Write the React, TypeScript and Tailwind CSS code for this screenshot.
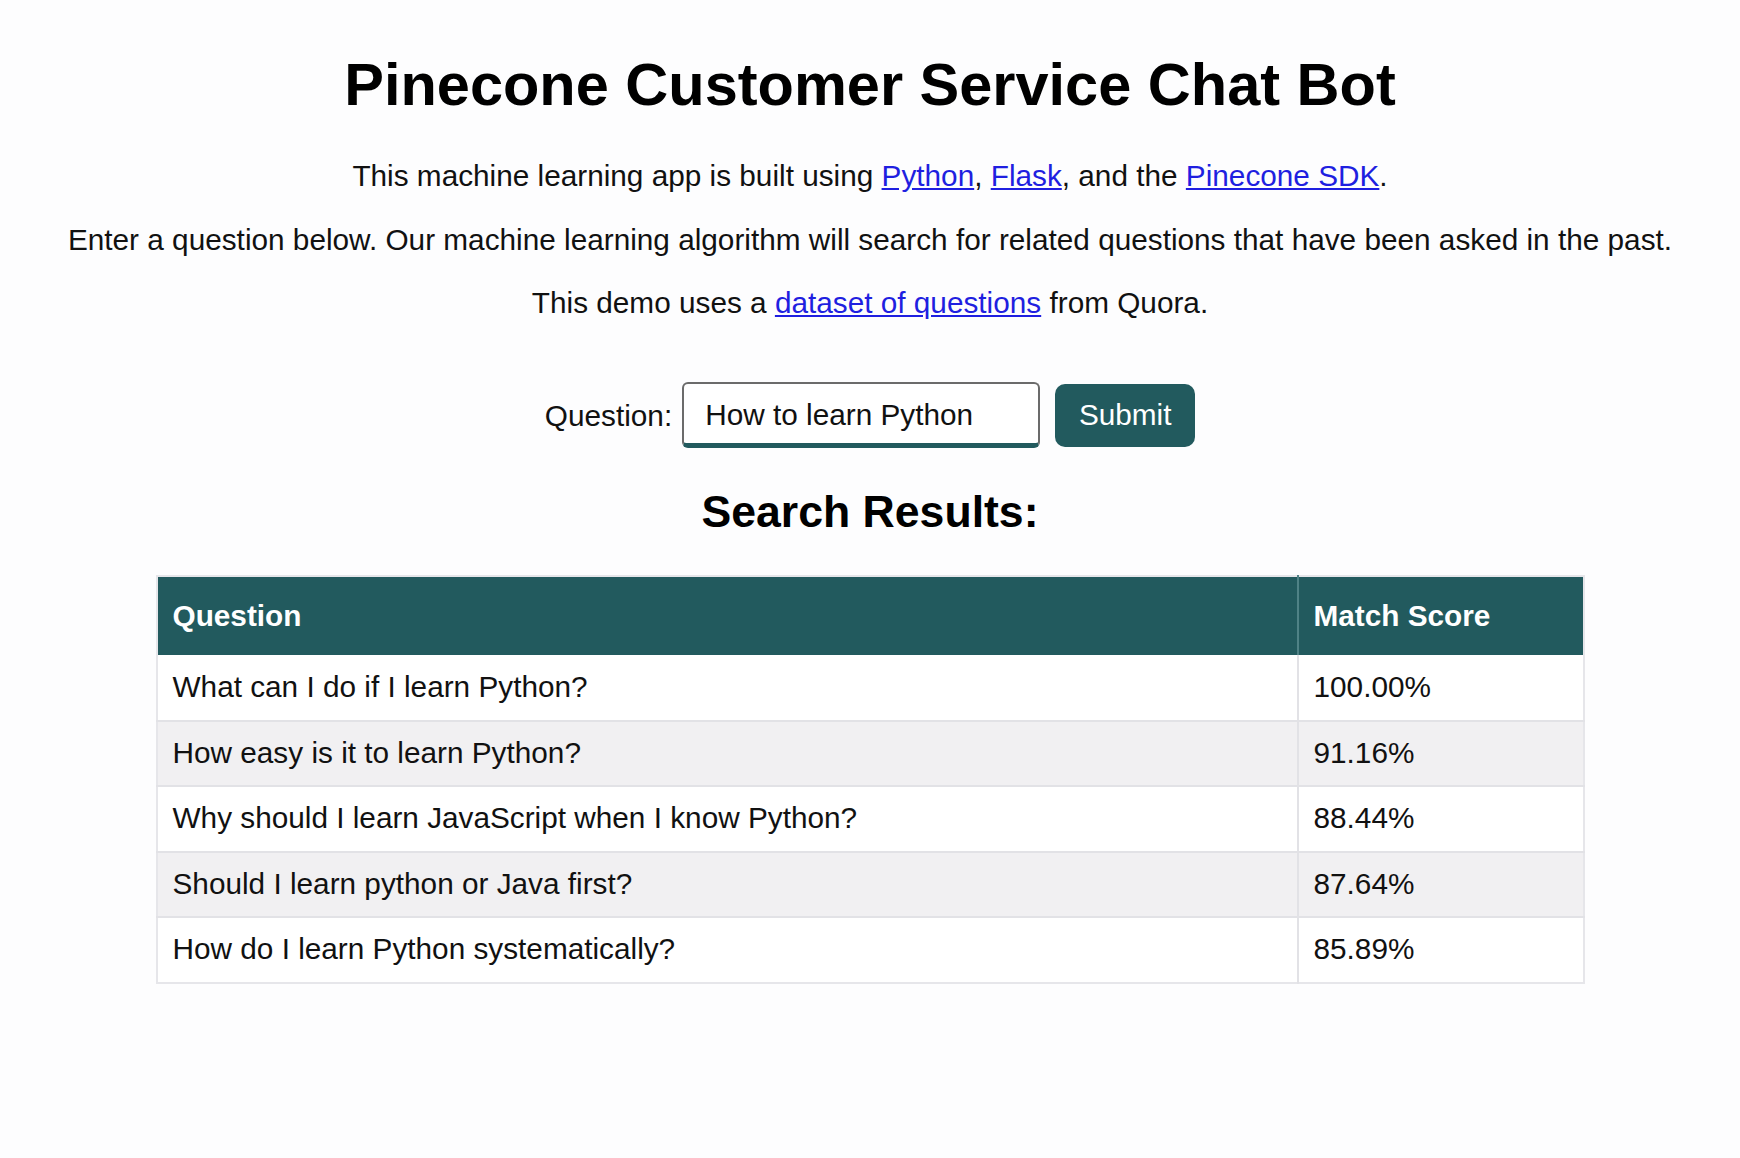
import React from "react";

const rows: [string, string][] = [
  ["What can I do if I learn Python?", "100.00%"],
  ["How easy is it to learn Python?", "91.16%"],
  ["Why should I learn JavaScript when I know Python?", "88.44%"],
  ["Should I learn python or Java first?", "87.64%"],
  ["How do I learn Python systematically?", "85.89%"],
];

export default function App() {
  return (
    <div
      className="min-h-screen bg-[#fdfdfe] text-[#111] pb-10"
      style={{ fontFamily: '"Liberation Sans", Arial, Helvetica, sans-serif' }}
    >
      <div className="flex flex-col items-center pt-[51px]">
        <h1 className="text-[59.5px] font-bold leading-[68px] mb-[40px] text-black">
          Pinecone Customer Service Chat Bot
        </h1>
        <p className="text-[29.75px] leading-[34px] mb-[29.5px]">
          This machine learning app is built using{" "}
          <a className="text-[#1f1fe0] underline" href="#">Python</a>,{" "}
          <a className="text-[#1f1fe0] underline" href="#">Flask</a>, and the{" "}
          <a className="text-[#1f1fe0] underline" href="#">Pinecone SDK</a>.
        </p>
        <p className="text-[29.75px] leading-[34px] mb-[29.5px]">
          Enter a question below. Our machine learning algorithm will search for related questions that have been asked in the past.
        </p>
        <p className="text-[29.75px] leading-[34px]">
          This demo uses a{" "}
          <a className="text-[#1f1fe0] underline" href="#">dataset of questions</a> from Quora.
        </p>

        <form className="flex items-center mt-[62px]" onSubmit={(e) => e.preventDefault()}>
          <label className="text-[29.75px] leading-[34px] mr-[10px] pt-[2px]">Question:</label>
          <input
            className="w-[358px] h-[66px] rounded-[6px] border-2 border-[#6b6b6b] border-b-[5px] border-b-[#225a5e] bg-white pl-[21px] pt-[3px] text-[29.75px] text-[#111] outline-none"
            defaultValue="How to learn Python"
          />
          <button
            type="submit"
            className="ml-[15px] w-[140px] h-[63px] rounded-[10px] bg-[#225a5e] text-white text-[29.75px] pt-[1px]"
          >
            Submit
          </button>
        </form>

        <h2 className="text-[44.6px] font-bold leading-[51px] mt-[38px] mb-[38px] text-black">
          Search Results:
        </h2>

        <table className="w-[1429px] border-collapse border-2 border-[#e6e6ea] text-[29.75px]">
          <thead>
            <tr className="bg-[#225a5e] text-white h-[79px]">
              <th className="w-[1141px] text-left font-bold px-[15px] border-r-2 border-r-[#4f8286] border-y-0">Question</th>
              <th className="text-left font-bold px-[15px]">Match Score</th>
            </tr>
          </thead>
          <tbody>
            {rows.map(([q, s], i) => (
              <tr
                key={i}
                className={`h-[65.5px] ${i === 0 ? "" : "border-t-2"} border-[#e2e2e6] ${i % 2 === 1 ? "bg-[#f1f0f2]" : "bg-white"}`}
              >
                <td className="px-[15px] border-r-2 border-[#e2e2e6]">{q}</td>
                <td className="px-[15px]">{s}</td>
              </tr>
            ))}
          </tbody>
        </table>
      </div>
    </div>
  );
}
